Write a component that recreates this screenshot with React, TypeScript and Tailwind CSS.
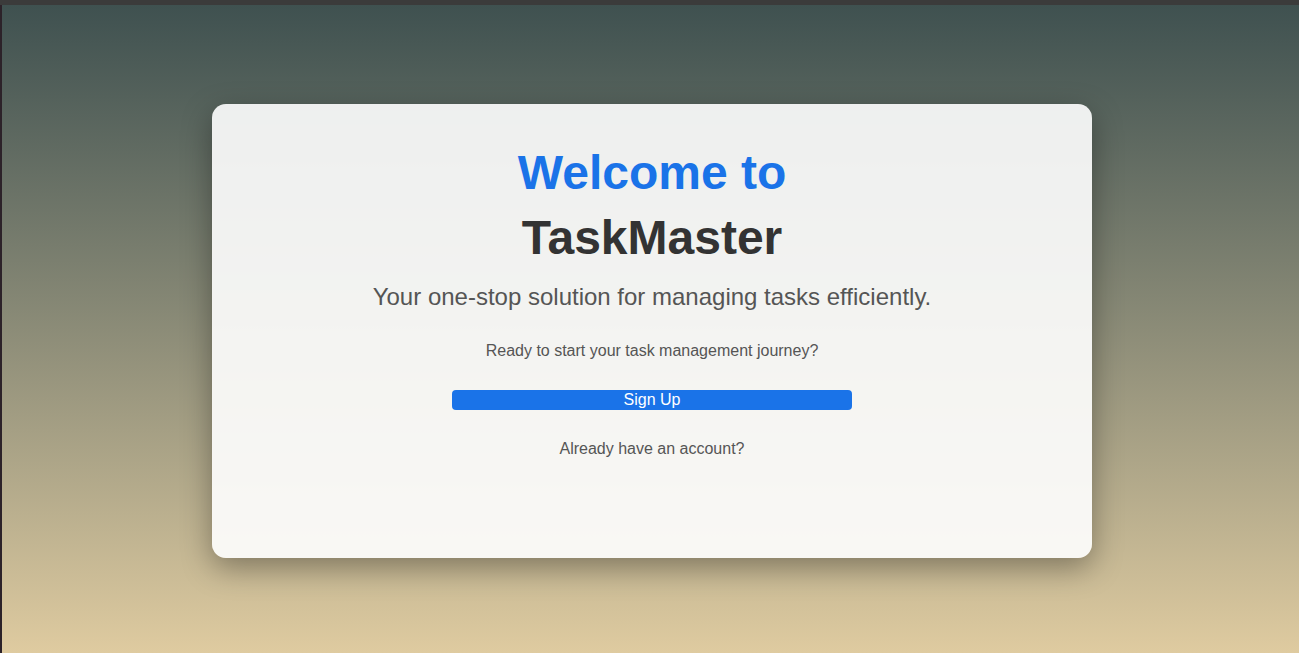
export default function App() {
  return (
    <div className="flex flex-col h-[653px] w-full overflow-hidden font-['Liberation_Sans',Arial,sans-serif]">
      {/* window frame top */}
      <div className="h-[5px] shrink-0 bg-[#3b3b3b]" />
      <div className="flex flex-1">
        <div className="w-[2px] shrink-0 bg-[#2c2229]" />
        <main className="flex-1 flex justify-center pt-[99px] pl-[3px] bg-gradient-to-b from-[#3f5150] to-[#dfcba0]">
          {/* Welcome card */}
          <section className="w-[880px] h-[454px] rounded-[14px] bg-white/90 shadow-[0_10px_30px_rgba(0,0,0,0.35)] pt-9 text-center">
            <h1 className="text-[48px] font-bold leading-[65px]">
              <span className="block text-[#1a73e8]">Welcome to</span>
              <span className="block text-[#333333]">TaskMaster</span>
            </h1>
            <p className="mt-[9px] text-[24px] leading-[36px] text-[#555555]">
              Your one-stop solution for managing tasks efficiently.
            </p>
            <p className="mt-6 text-base leading-6 text-[#555555]">
              Ready to start your task management journey?
            </p>
            <button className="mt-[27px] w-[400px] h-5 rounded-[4px] bg-[#1a73e8] text-white text-base leading-5">
              Sign Up
            </button>
            <p className="mt-[25px] text-base leading-6 text-[#555555]">
              Already have an account?
            </p>
          </section>
        </main>
      </div>
    </div>
  );
}
